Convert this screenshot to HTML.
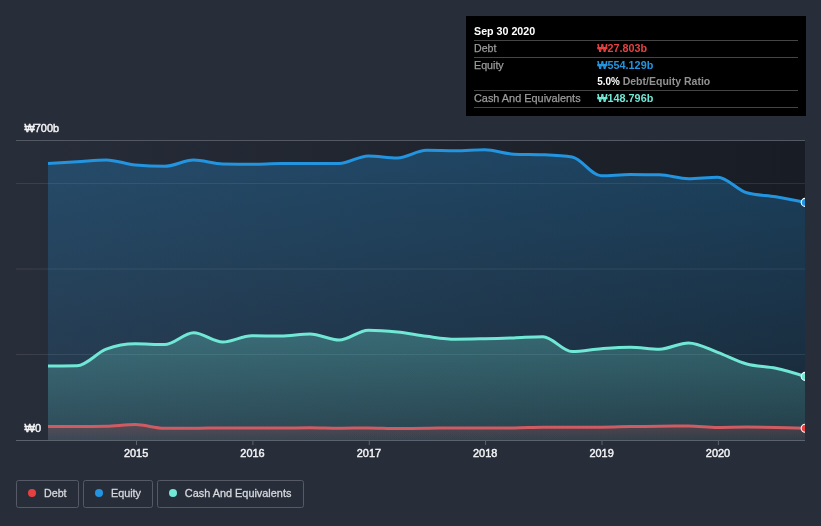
<!DOCTYPE html>
<html lang="en">
<head>
<meta charset="utf-8">
<title>Debt to Equity History</title>
<style>
html,body{margin:0;padding:0;background:#272d39;width:821px;height:526px;overflow:hidden}
svg{display:block;position:absolute;left:0;top:0;will-change:transform;transform:translateZ(0)}
text{font-family:"Liberation Sans",sans-serif;font-size:11px}
.ax{fill:#f4f4f6;font-size:11px;stroke:#f4f4f6;stroke-width:0.45px}
.lg{fill:#d6d8dc;stroke:#d6d8dc;stroke-width:0.3px}
.tl{fill:#9c9c9c;stroke:#9c9c9c;stroke-width:0.25px}
.b{font-weight:bold}
</style>
</head>
<body>
<svg width="821" height="526" viewBox="0 0 821 526">
<defs>
<linearGradient id="bgG" x1="0" y1="0" x2="1" y2="0">
<stop offset="0" stop-color="#272d39"/>
<stop offset="1" stop-color="#181c24"/>
</linearGradient>
<linearGradient id="eqG" gradientUnits="userSpaceOnUse" x1="0" y1="148" x2="0" y2="440">
<stop offset="0" stop-color="#2394df" stop-opacity="0.305"/>
<stop offset="1" stop-color="#2394df" stop-opacity="0.09"/>
</linearGradient>
<linearGradient id="caG" gradientUnits="userSpaceOnUse" x1="0" y1="330" x2="0" y2="440">
<stop offset="0" stop-color="#71e7d6" stop-opacity="0.29"/>
<stop offset="1" stop-color="#71e7d6" stop-opacity="0.11"/>
</linearGradient>
<linearGradient id="deG" gradientUnits="userSpaceOnUse" x1="0" y1="424" x2="0" y2="440">
<stop offset="0" stop-color="#e64141" stop-opacity="0.23"/>
<stop offset="1" stop-color="#e64141" stop-opacity="0.06"/>
</linearGradient>
<clipPath id="plot"><rect x="16" y="140" width="789" height="300"/></clipPath>
</defs>

<!-- plot background -->
<rect x="16" y="140" width="789" height="300" fill="url(#bgG)"/>

<!-- gridlines -->
<g fill="#ffffff" fill-opacity="0.095">
<rect x="16" y="183" width="789" height="1"/>
<rect x="16" y="268.5" width="789" height="1"/>
<rect x="16" y="354" width="789" height="1"/>
</g>
<g clip-path="url(#plot)">
<path d="M48.00,163.40C57.71,162.89 67.41,162.38 77.12,161.80C86.82,161.22 96.53,159.90 106.23,159.90C115.94,159.90 125.64,164.13 135.35,165.00C145.05,165.87 154.76,166.30 164.46,166.30C174.17,166.30 183.87,160.10 193.58,160.10C203.28,160.10 212.99,163.87 222.69,164.00C232.40,164.13 242.10,164.20 251.81,164.20C261.51,164.20 271.22,163.60 280.92,163.60C290.63,163.60 300.33,163.60 310.04,163.60C319.74,163.60 329.45,163.57 339.15,163.50C348.86,163.43 358.56,155.90 368.27,155.90C377.97,155.90 387.68,157.90 397.38,157.90C407.09,157.90 416.79,150.30 426.50,150.30C436.21,150.30 445.91,150.70 455.62,150.70C465.32,150.70 475.03,149.70 484.73,149.70C494.44,149.70 504.14,153.80 513.85,154.20C523.55,154.60 533.26,154.40 542.96,154.80C552.67,155.20 562.37,155.53 572.08,157.00C581.78,158.47 591.49,175.80 601.19,175.80C610.90,175.80 620.60,174.60 630.31,174.60C640.01,174.60 649.72,174.67 659.42,174.80C669.13,174.93 678.83,178.70 688.54,178.70C698.24,178.70 707.95,177.30 717.65,177.30C727.36,177.30 737.06,190.13 746.77,192.80C756.47,195.47 766.18,195.20 775.88,196.80C785.59,198.40 795.29,200.40 805.00,202.40L805.00,440L48.00,440Z" fill="url(#eqG)"/>
<path d="M48.00,366.00C57.71,365.97 67.41,365.93 77.12,365.80C86.82,365.67 96.53,352.80 106.23,349.20C115.94,345.60 125.64,343.80 135.35,343.80C145.05,343.80 154.76,344.60 164.46,344.60C174.17,344.60 183.87,332.80 193.58,332.80C203.28,332.80 212.99,342.00 222.69,342.00C232.40,342.00 242.10,335.70 251.81,335.70C261.51,335.70 271.22,336.10 280.92,336.10C290.63,336.10 300.33,334.00 310.04,334.00C319.74,334.00 329.45,340.10 339.15,340.10C348.86,340.10 358.56,330.20 368.27,330.20C377.97,330.20 387.68,330.98 397.38,332.00C407.09,333.02 416.79,335.10 426.50,336.30C436.21,337.50 445.91,339.20 455.62,339.20C465.32,339.20 475.03,338.92 484.73,338.70C494.44,338.48 504.14,338.23 513.85,337.90C523.55,337.57 533.26,336.70 542.96,336.70C552.67,336.70 562.37,351.50 572.08,351.50C581.78,351.50 591.49,349.42 601.19,348.70C610.90,347.98 620.60,347.20 630.31,347.20C640.01,347.20 649.72,349.20 659.42,349.20C669.13,349.20 678.83,342.90 688.54,342.90C698.24,342.90 707.95,348.78 717.65,352.30C727.36,355.82 737.06,361.33 746.77,364.00C756.47,366.67 766.18,366.23 775.88,368.30C785.59,370.37 795.29,373.38 805.00,376.40L805.00,440L48.00,440Z" fill="url(#caG)"/>
<path d="M48.00,426.60C57.71,426.60 67.41,426.60 77.12,426.60C86.82,426.60 96.53,426.47 106.23,426.20C115.94,425.93 125.64,424.60 135.35,424.60C145.05,424.60 154.76,428.30 164.46,428.30C174.17,428.30 183.87,428.30 193.58,428.30C203.28,428.30 212.99,427.90 222.69,427.90C232.40,427.90 242.10,427.90 251.81,427.90C261.51,427.90 271.22,428.10 280.92,428.10C290.63,428.10 300.33,427.70 310.04,427.70C319.74,427.70 329.45,428.20 339.15,428.20C348.86,428.20 358.56,427.90 368.27,427.90C377.97,427.90 387.68,428.50 397.38,428.50C407.09,428.50 416.79,428.40 426.50,428.30C436.21,428.20 445.91,427.90 455.62,427.90C465.32,427.90 475.03,428.00 484.73,428.00C494.44,428.00 504.14,427.97 513.85,427.90C523.55,427.83 533.26,427.37 542.96,427.30C552.67,427.23 562.37,427.20 572.08,427.20C581.78,427.20 591.49,427.20 601.19,427.20C610.90,427.20 620.60,426.77 630.31,426.60C640.01,426.43 649.72,426.30 659.42,426.20C669.13,426.10 678.83,426.00 688.54,426.00C698.24,426.00 707.95,427.40 717.65,427.40C727.36,427.40 737.06,427.10 746.77,427.10C756.47,427.10 766.18,427.22 775.88,427.40C785.59,427.58 795.29,427.89 805.00,428.20L805.00,440L48.00,440Z" fill="url(#deG)"/>
</g>

<rect x="16" y="140" width="789" height="1" fill="#545862"/>
<rect x="16" y="440" width="789" height="1" fill="#5c626e"/>
<g fill="#5c626e">
<rect x="136.0" y="441" width="1" height="4"/>
<rect x="252.4" y="441" width="1" height="4"/>
<rect x="368.8" y="441" width="1" height="4"/>
<rect x="485.1" y="441" width="1" height="4"/>
<rect x="601.5" y="441" width="1" height="4"/>
<rect x="717.9" y="441" width="1" height="4"/>
</g>

<g clip-path="url(#plot)" fill="none" stroke-width="3" stroke-linejoin="round" stroke-linecap="butt">
<path d="M48.00,163.40C57.71,162.89 67.41,162.38 77.12,161.80C86.82,161.22 96.53,159.90 106.23,159.90C115.94,159.90 125.64,164.13 135.35,165.00C145.05,165.87 154.76,166.30 164.46,166.30C174.17,166.30 183.87,160.10 193.58,160.10C203.28,160.10 212.99,163.87 222.69,164.00C232.40,164.13 242.10,164.20 251.81,164.20C261.51,164.20 271.22,163.60 280.92,163.60C290.63,163.60 300.33,163.60 310.04,163.60C319.74,163.60 329.45,163.57 339.15,163.50C348.86,163.43 358.56,155.90 368.27,155.90C377.97,155.90 387.68,157.90 397.38,157.90C407.09,157.90 416.79,150.30 426.50,150.30C436.21,150.30 445.91,150.70 455.62,150.70C465.32,150.70 475.03,149.70 484.73,149.70C494.44,149.70 504.14,153.80 513.85,154.20C523.55,154.60 533.26,154.40 542.96,154.80C552.67,155.20 562.37,155.53 572.08,157.00C581.78,158.47 591.49,175.80 601.19,175.80C610.90,175.80 620.60,174.60 630.31,174.60C640.01,174.60 649.72,174.67 659.42,174.80C669.13,174.93 678.83,178.70 688.54,178.70C698.24,178.70 707.95,177.30 717.65,177.30C727.36,177.30 737.06,190.13 746.77,192.80C756.47,195.47 766.18,195.20 775.88,196.80C785.59,198.40 795.29,200.40 805.00,202.40" stroke="#2394df"/>
<path d="M48.00,366.00C57.71,365.97 67.41,365.93 77.12,365.80C86.82,365.67 96.53,352.80 106.23,349.20C115.94,345.60 125.64,343.80 135.35,343.80C145.05,343.80 154.76,344.60 164.46,344.60C174.17,344.60 183.87,332.80 193.58,332.80C203.28,332.80 212.99,342.00 222.69,342.00C232.40,342.00 242.10,335.70 251.81,335.70C261.51,335.70 271.22,336.10 280.92,336.10C290.63,336.10 300.33,334.00 310.04,334.00C319.74,334.00 329.45,340.10 339.15,340.10C348.86,340.10 358.56,330.20 368.27,330.20C377.97,330.20 387.68,330.98 397.38,332.00C407.09,333.02 416.79,335.10 426.50,336.30C436.21,337.50 445.91,339.20 455.62,339.20C465.32,339.20 475.03,338.92 484.73,338.70C494.44,338.48 504.14,338.23 513.85,337.90C523.55,337.57 533.26,336.70 542.96,336.70C552.67,336.70 562.37,351.50 572.08,351.50C581.78,351.50 591.49,349.42 601.19,348.70C610.90,347.98 620.60,347.20 630.31,347.20C640.01,347.20 649.72,349.20 659.42,349.20C669.13,349.20 678.83,342.90 688.54,342.90C698.24,342.90 707.95,348.78 717.65,352.30C727.36,355.82 737.06,361.33 746.77,364.00C756.47,366.67 766.18,366.23 775.88,368.30C785.59,370.37 795.29,373.38 805.00,376.40" stroke="#71e7d6"/>
<path d="M48.00,426.60C57.71,426.60 67.41,426.60 77.12,426.60C86.82,426.60 96.53,426.47 106.23,426.20C115.94,425.93 125.64,424.60 135.35,424.60C145.05,424.60 154.76,428.30 164.46,428.30C174.17,428.30 183.87,428.30 193.58,428.30C203.28,428.30 212.99,427.90 222.69,427.90C232.40,427.90 242.10,427.90 251.81,427.90C261.51,427.90 271.22,428.10 280.92,428.10C290.63,428.10 300.33,427.70 310.04,427.70C319.74,427.70 329.45,428.20 339.15,428.20C348.86,428.20 358.56,427.90 368.27,427.90C377.97,427.90 387.68,428.50 397.38,428.50C407.09,428.50 416.79,428.40 426.50,428.30C436.21,428.20 445.91,427.90 455.62,427.90C465.32,427.90 475.03,428.00 484.73,428.00C494.44,428.00 504.14,427.97 513.85,427.90C523.55,427.83 533.26,427.37 542.96,427.30C552.67,427.23 562.37,427.20 572.08,427.20C581.78,427.20 591.49,427.20 601.19,427.20C610.90,427.20 620.60,426.77 630.31,426.60C640.01,426.43 649.72,426.30 659.42,426.20C669.13,426.10 678.83,426.00 688.54,426.00C698.24,426.00 707.95,427.40 717.65,427.40C727.36,427.40 737.06,427.10 746.77,427.10C756.47,427.10 766.18,427.22 775.88,427.40C785.59,427.58 795.29,427.89 805.00,428.20" stroke="#cf5b63"/>
<g stroke="#ffffff" stroke-width="1.1">
<circle cx="805.2" cy="202.4" r="4" fill="#2394df"/>
<circle cx="805.2" cy="376.4" r="4" fill="#71e7d6"/>
<circle cx="805.2" cy="428.2" r="4" fill="#e84040"/>
</g>
</g>

<!-- axis labels -->
<text class="ax" x="24.5" y="131.8" textLength="34.5" lengthAdjust="spacingAndGlyphs">₩700b</text>
<text class="ax" x="24.5" y="431.5" textLength="16.5" lengthAdjust="spacingAndGlyphs">₩0</text>
<g class="ax" text-anchor="middle">
<text x="136.1" y="456.6" textLength="24.3" lengthAdjust="spacingAndGlyphs">2015</text>
<text x="252.5" y="456.6" textLength="24.3" lengthAdjust="spacingAndGlyphs">2016</text>
<text x="368.9" y="456.6" textLength="24.3" lengthAdjust="spacingAndGlyphs">2017</text>
<text x="485.2" y="456.6" textLength="24.3" lengthAdjust="spacingAndGlyphs">2018</text>
<text x="601.6" y="456.6" textLength="24.3" lengthAdjust="spacingAndGlyphs">2019</text>
<text x="718.0" y="456.6" textLength="24.3" lengthAdjust="spacingAndGlyphs">2020</text>
</g>

<!-- tooltip -->
<rect x="466" y="16" width="340" height="100" fill="#000000"/>
<g fill="#454545">
<rect x="474" y="40" width="324" height="1"/>
<rect x="474" y="57" width="324" height="1"/>
<rect x="474" y="90" width="324" height="1"/>
<rect x="474" y="107" width="324" height="1"/>
</g>
<g>
<text x="474" y="34.8" class="b" fill="#ffffff" textLength="61.2" lengthAdjust="spacingAndGlyphs">Sep 30 2020</text>
<text x="474" y="51.7" class="tl" textLength="22.4" lengthAdjust="spacingAndGlyphs">Debt</text>
<text x="597.3" y="51.7" class="b" fill="#e64141" textLength="49.8" lengthAdjust="spacingAndGlyphs">₩27.803b</text>
<text x="474" y="68.7" class="tl" textLength="29.7" lengthAdjust="spacingAndGlyphs">Equity</text>
<text x="597.3" y="68.7" class="b" fill="#2394df" textLength="56" lengthAdjust="spacingAndGlyphs">₩554.129b</text>
<text x="597.3" y="84.8" class="b" fill="#ffffff" textLength="22.6" lengthAdjust="spacingAndGlyphs">5.0%</text>
<text x="622.7" y="84.8" class="b" fill="#929292" textLength="87.6" lengthAdjust="spacingAndGlyphs">Debt/Equity Ratio</text>
<text x="474" y="101.5" class="tl" textLength="106.6" lengthAdjust="spacingAndGlyphs">Cash And Equivalents</text>
<text x="597.3" y="101.5" class="b" fill="#71e7d6" textLength="56" lengthAdjust="spacingAndGlyphs">₩148.796b</text>
</g>

<!-- legend -->
<g fill="none" stroke="#555a66">
<rect x="16.5" y="480.5" width="62" height="27" rx="2"/>
<rect x="83.5" y="480.5" width="69" height="27" rx="2"/>
<rect x="157.5" y="480.5" width="146" height="27" rx="2"/>
</g>
<circle cx="32" cy="493" r="4" fill="#e64141"/>
<circle cx="99" cy="493" r="4" fill="#2394df"/>
<circle cx="173" cy="493" r="4" fill="#71e7d6"/>
<text class="lg" x="44" y="496.6" textLength="22.6" lengthAdjust="spacingAndGlyphs">Debt</text>
<text class="lg" x="111" y="496.6" textLength="30" lengthAdjust="spacingAndGlyphs">Equity</text>
<text class="lg" x="184.8" y="496.6" textLength="106.6" lengthAdjust="spacingAndGlyphs">Cash And Equivalents</text>
</svg>
</body>
</html>
